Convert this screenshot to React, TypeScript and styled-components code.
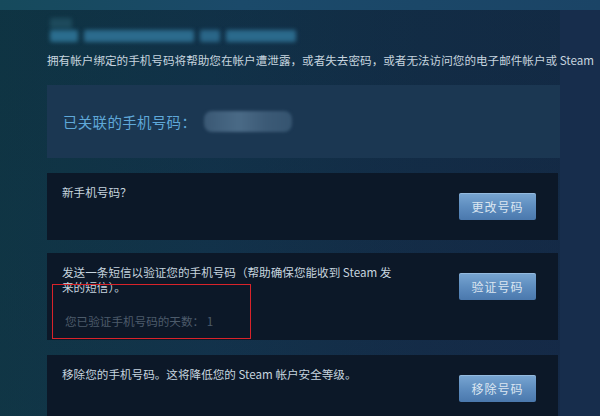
import React from 'react';
import styled, { createGlobalStyle } from 'styled-components';

const colors = {
  text: '#c6d4df',
  blue: '#5fa8d8',
  muted: '#4c5b6b',
  card: '#0c1828',
  phoneBox: '#1b3752',
  red: '#d8232a',
};

const GlobalStyle = createGlobalStyle`
  html, body {
    margin: 0;
    padding: 0;
    width: 600px;
    height: 416px;
    overflow: hidden;
    background: #15304a;
  }
  * {
    box-sizing: border-box;
  }
`;

const Page = styled.div`
  width: 600px;
  height: 416px;
  display: flex;
  flex-direction: column;
  overflow: hidden;
  font-family: 'Noto Sans CJK SC', 'Noto Sans', sans-serif;
  background: linear-gradient(90deg, #113a49 0%, #143650 35%, #162e4c 70%, #172b4b 100%);
`;

const TopStrip = styled.div`
  height: 10px;
  flex-shrink: 0;
  background: linear-gradient(90deg, #164a5c 0%, #1b4a6a 40%, #1b4466 100%);
`;

// right-hand band past the content column is painted as part of the background
const Main = styled.div`
  flex: 1;
  background: linear-gradient(90deg, transparent 0px, transparent 560px, #172d4c 560px);
`;

const Column = styled.div`
  width: 560px;
  height: 100%;
  padding-left: 47px;
  display: flex;
  flex-direction: column;
  background: linear-gradient(180deg, rgba(10, 40, 55, 0.35) 0%, rgba(12, 30, 50, 0.15) 100%);
`;

const TitleRow = styled.div`
  display: flex;
  flex-direction: column;
  gap: 1px;
  margin-top: 8px;
  height: 34px;
`;

const BlurBlock = styled.div<{ w: number; h: number; c: string; ml?: number }>`
  width: ${({ w }) => w}px;
  height: ${({ h }) => h}px;
  margin-left: ${({ ml }) => ml || 0}px;
  background: ${({ c }) => c};
  filter: blur(2px);
  border-radius: 2px;
`;

const BlurBar = styled.div`
  display: flex;
  flex-direction: row;
  gap: 6px;
  padding-left: 3px;
`;

const Description = styled.div`
  font-size: 11.6px;
  line-height: 16px;
  color: ${colors.text};
  white-space: nowrap;
  width: 560px;
`;

const PhoneBox = styled.div`
  margin-top: 17px;
  width: 513px;
  height: 73px;
  flex-shrink: 0;
  background: ${colors.phoneBox};
  display: flex;
  flex-direction: row;
  align-items: center;
  padding-left: 16px;
`;

const PhoneLabel = styled.span`
  font-size: 14.5px;
  color: ${colors.blue};
  letter-spacing: 0.3px;
`;

const BlurredNumber = styled.div`
  width: 88px;
  height: 21px;
  margin-left: 8px;
  border-radius: 8px;
  background: linear-gradient(90deg, #3a5874 0%, #4a6a86 40%, #3c5a76 70%, #355470 100%);
  filter: blur(1.5px);
`;

const Card = styled.div<{ h: number; mt: number }>`
  position: relative;
  margin-top: ${({ mt }) => mt}px;
  width: 511px;
  height: ${({ h }) => h}px;
  flex-shrink: 0;
  background: ${colors.card};
  display: flex;
  flex-direction: row;
  justify-content: space-between;
  align-items: flex-start;
  padding: 12px 22px 12px 15px;
`;

const CardText = styled.div`
  width: 340px;
  display: flex;
  flex-direction: column;
`;

const Text = styled.div`
  font-size: 11.6px;
  line-height: 15px;
  color: ${colors.text};
`;

const MutedText = styled(Text)`
  color: ${colors.muted};
  margin-top: 19px;
  padding-left: 3px;
`;

const Button = styled.button`
  margin-top: 8px;
  width: 77px;
  height: 27px;
  border: none;
  border-radius: 2px;
  padding: 0;
  font-family: inherit;
  font-size: 12px;
  color: #dbe6f1;
  letter-spacing: 1px;
  background: linear-gradient(180deg, #79a6d2 0%, #5e8dbf 50%, #4a78ad 100%);
  box-shadow: inset 0 1px 0 rgba(200, 225, 250, 0.35);
  cursor: pointer;
`;

const Highlight = styled.div`
  position: absolute;
  left: 5px;
  top: 31px;
  width: 199px;
  height: 55px;
  border: 1.5px solid ${colors.red};
  pointer-events: none;
`;

export default function App() {
  return (
    <>
      <GlobalStyle />
      <Page>
        <TopStrip />
        <Main>
          <Column>
            <TitleRow>
              <BlurBlock w={22} h={11} c="#1d4a5c" ml={3} />
              <BlurBar>
                <BlurBlock w={28} h={12} c="#2b6d8e" />
                <BlurBlock w={110} h={12} c="#2c6b8d" />
                <BlurBlock w={20} h={12} c="#2a6688" />
                <BlurBlock w={70} h={12} c="#2b6a8c" />
              </BlurBar>
            </TitleRow>
            <Description>
              拥有帐户绑定的手机号码将帮助您在帐户遭泄露，或者失去密码，或者无法访问您的电子邮件帐户或 Steam
            </Description>
            <PhoneBox>
              <PhoneLabel>已关联的手机号码：</PhoneLabel>
              <BlurredNumber />
            </PhoneBox>
            <Card h={67} mt={15}>
              <CardText>
                <Text>新手机号码？</Text>
              </CardText>
              <Button>更改号码</Button>
            </Card>
            <Card h={87} mt={13}>
              <CardText>
                <Text>发送一条短信以验证您的手机号码（帮助确保您能收到 Steam 发来的短信）。</Text>
                <MutedText>您已验证手机号码的天数： 1</MutedText>
              </CardText>
              <Button>验证号码</Button>
              <Highlight />
            </Card>
            <Card h={70} mt={15}>
              <CardText>
                <Text>移除您的手机号码。这将降低您的 Steam 帐户安全等级。</Text>
              </CardText>
              <Button>移除号码</Button>
            </Card>
          </Column>
        </Main>
      </Page>
    </>
  );
}
